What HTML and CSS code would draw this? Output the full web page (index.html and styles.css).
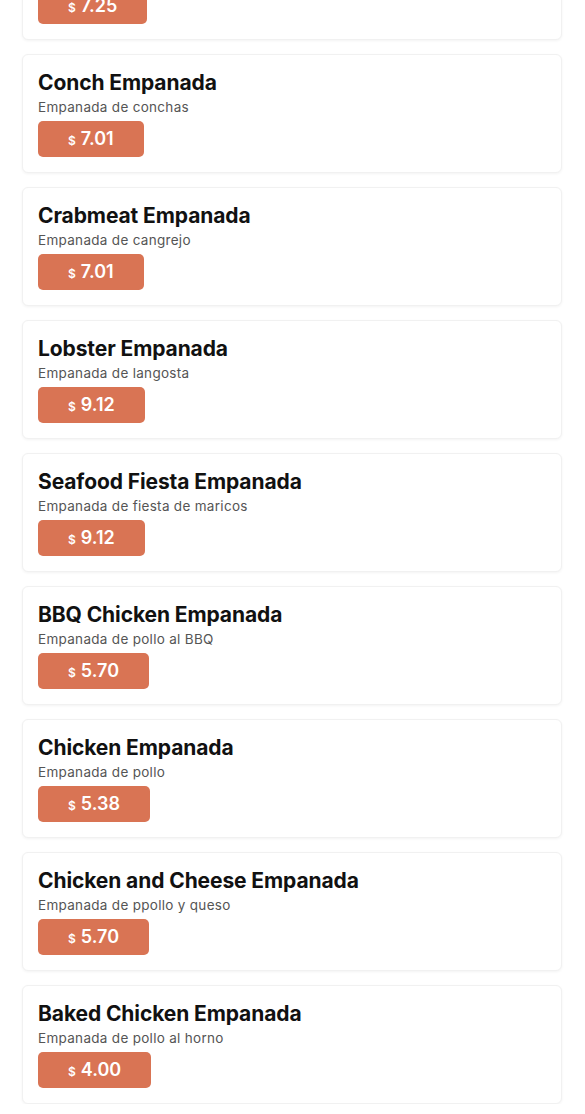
FILE: index.html
```html
<!DOCTYPE html>
<html lang="es">
<head>
    <meta charset="UTF-8">
    <meta name="viewport" content="width=device-width, initial-scale=1.0">
    <link rel="stylesheet" href="styles.css">
    <title>Empanadas</title>
</head>
<body>

<div class="menu-list">
    <div class="menu-item">
        <div class="item-name">Shrimp Empanada</div>
        <div class="item-desc">Empanada de camarones</div>
        <div class="item-price"><span class="currency">$</span> 7.25</div>
    </div>
    <div class="menu-item">
        <div class="item-name">Conch Empanada</div>
        <div class="item-desc">Empanada de conchas</div>
        <div class="item-price"><span class="currency">$</span> 7.01</div>
    </div>
    <div class="menu-item">
        <div class="item-name">Crabmeat Empanada</div>
        <div class="item-desc">Empanada de cangrejo</div>
        <div class="item-price"><span class="currency">$</span> 7.01</div>
    </div>
    <div class="menu-item">
        <div class="item-name">Lobster Empanada</div>
        <div class="item-desc">Empanada de langosta</div>
        <div class="item-price"><span class="currency">$</span> 9.12</div>
    </div>
    <div class="menu-item">
        <div class="item-name">Seafood Fiesta Empanada</div>
        <div class="item-desc">Empanada de fiesta de maricos</div>
        <div class="item-price"><span class="currency">$</span> 9.12</div>
    </div>
    <div class="menu-item">
        <div class="item-name">BBQ Chicken Empanada</div>
        <div class="item-desc">Empanada de pollo al BBQ</div>
        <div class="item-price"><span class="currency">$</span> 5.70</div>
    </div>
    <div class="menu-item">
        <div class="item-name">Chicken Empanada</div>
        <div class="item-desc">Empanada de pollo</div>
        <div class="item-price"><span class="currency">$</span> 5.38</div>
    </div>
    <div class="menu-item">
        <div class="item-name">Chicken and Cheese Empanada</div>
        <div class="item-desc">Empanada de ppollo y queso</div>
        <div class="item-price"><span class="currency">$</span> 5.70</div>
    </div>
    <div class="menu-item">
        <div class="item-name">Baked Chicken Empanada</div>
        <div class="item-desc">Empanada de pollo al horno</div>
        <div class="item-price"><span class="currency">$</span> 4.00</div>
    </div>
</div>

</body>
</html>
```

FILE: styles.css
```css
body {
    margin: 0;
    background-color: #fff;
    font-family: Inter, "Open Sans", sans-serif;
}

.menu-list {
    display: flex;
    flex-direction: column;
    gap: 14px;
    margin-top: -79px;
    padding: 0 23px 0 22px;
}

.menu-item {
    height: 119px;
    box-sizing: border-box;
    padding: 15px 15px 15px;
    border: 1px solid #f1f1f1;
    border-radius: 6px;
    box-shadow: 0 1px 3px rgba(0, 0, 0, 0.05);
    background-color: #fff;
}

.item-name {
    font-size: 21px;
    line-height: 26px;
    font-weight: 700;
    color: #111;
    letter-spacing: -0.1px;
}

.item-desc {
    font-size: 13.5px;
    line-height: 20px;
    margin-top: 1px;
    color: #555;
    letter-spacing: 0.3px;
}

.item-price {
    display: inline-flex;
    align-items: baseline;
    gap: 5px;
    height: 36px;
    line-height: 36px;
    margin-top: 4px;
    padding: 0 30px;
    border-radius: 5px;
    background-color: #d97454;
    color: #fff;
    font-size: 18px;
    font-weight: 600;
}

.currency {
    font-size: 12px;
}
```
